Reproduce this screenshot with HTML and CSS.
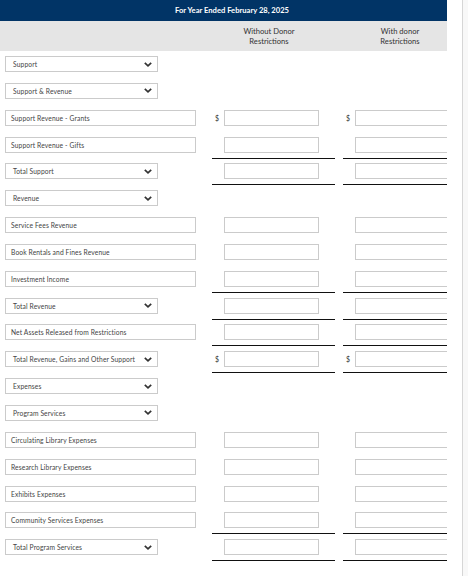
FILE: index.html
```html
<!DOCTYPE html>
<html>
<head>
<meta charset="utf-8">
<link rel="stylesheet" href="styles.css">
</head>
<body>
<div class="page">
  <div class="frame">
    <div class="sheet">
      <div class="title">For Year Ended February 28, 2025</div>
      <div class="colhead">
        <div></div>
        <div class="ch">Without Donor<br>Restrictions</div>
        <div></div>
        <div class="ch">With donor<br>Restrictions</div>
      </div>
      <div class="rows">
        <div class="row"><div class="lab"><div class="sel"><span>Support</span><svg class="chev" viewBox="0 0 10 6"><path d="M1 1 L5 4.6 L9 1"/></svg></div></div></div>
        <div class="row"><div class="lab"><div class="sel"><span>Support &amp; Revenue</span><svg class="chev" viewBox="0 0 10 6"><path d="M1 1 L5 4.6 L9 1"/></svg></div></div></div>
        <div class="row"><div class="lab"><div class="txt">Support Revenue - Grants</div></div>
          <div class="amt"><span class="cur">$</span><div class="box"></div></div><div></div>
          <div class="amt"><span class="cur">$</span><div class="box"></div></div></div>
        <div class="row"><div class="lab"><div class="txt">Support Revenue - Gifts</div></div>
          <div class="amt rule"><span class="cur"></span><div class="box"></div></div><div></div>
          <div class="amt rule"><span class="cur"></span><div class="box"></div></div></div>
        <div class="row"><div class="lab"><div class="sel"><span>Total Support</span><svg class="chev" viewBox="0 0 10 6"><path d="M1 1 L5 4.6 L9 1"/></svg></div></div>
          <div class="amt rule"><span class="cur"></span><div class="box"></div></div><div></div>
          <div class="amt rule"><span class="cur"></span><div class="box"></div></div></div>
        <div class="row"><div class="lab"><div class="sel"><span>Revenue</span><svg class="chev" viewBox="0 0 10 6"><path d="M1 1 L5 4.6 L9 1"/></svg></div></div></div>
        <div class="row"><div class="lab"><div class="txt">Service Fees Revenue</div></div>
          <div class="amt"><span class="cur"></span><div class="box"></div></div><div></div>
          <div class="amt"><span class="cur"></span><div class="box"></div></div></div>
        <div class="row"><div class="lab"><div class="txt">Book Rentals and Fines Revenue</div></div>
          <div class="amt"><span class="cur"></span><div class="box"></div></div><div></div>
          <div class="amt"><span class="cur"></span><div class="box"></div></div></div>
        <div class="row"><div class="lab"><div class="txt">Investment Income</div></div>
          <div class="amt rule"><span class="cur"></span><div class="box"></div></div><div></div>
          <div class="amt rule"><span class="cur"></span><div class="box"></div></div></div>
        <div class="row"><div class="lab"><div class="sel"><span>Total Revenue</span><svg class="chev" viewBox="0 0 10 6"><path d="M1 1 L5 4.6 L9 1"/></svg></div></div>
          <div class="amt rule"><span class="cur"></span><div class="box"></div></div><div></div>
          <div class="amt rule"><span class="cur"></span><div class="box"></div></div></div>
        <div class="row"><div class="lab"><div class="txt">Net Assets Released from Restrictions</div></div>
          <div class="amt rule"><span class="cur"></span><div class="box"></div></div><div></div>
          <div class="amt rule"><span class="cur"></span><div class="box"></div></div></div>
        <div class="row"><div class="lab"><div class="sel"><span>Total Revenue, Gains and Other Support</span><svg class="chev" viewBox="0 0 10 6"><path d="M1 1 L5 4.6 L9 1"/></svg></div></div>
          <div class="amt rule"><span class="cur">$</span><div class="box"></div></div><div></div>
          <div class="amt rule"><span class="cur">$</span><div class="box"></div></div></div>
        <div class="row"><div class="lab"><div class="sel"><span>Expenses</span><svg class="chev" viewBox="0 0 10 6"><path d="M1 1 L5 4.6 L9 1"/></svg></div></div></div>
        <div class="row"><div class="lab"><div class="sel"><span>Program Services</span><svg class="chev" viewBox="0 0 10 6"><path d="M1 1 L5 4.6 L9 1"/></svg></div></div></div>
        <div class="row"><div class="lab"><div class="txt">Circulating Library Expenses</div></div>
          <div class="amt"><span class="cur"></span><div class="box"></div></div><div></div>
          <div class="amt"><span class="cur"></span><div class="box"></div></div></div>
        <div class="row"><div class="lab"><div class="txt">Research Library Expenses</div></div>
          <div class="amt"><span class="cur"></span><div class="box"></div></div><div></div>
          <div class="amt"><span class="cur"></span><div class="box"></div></div></div>
        <div class="row"><div class="lab"><div class="txt">Exhibits Expenses</div></div>
          <div class="amt"><span class="cur"></span><div class="box"></div></div><div></div>
          <div class="amt"><span class="cur"></span><div class="box"></div></div></div>
        <div class="row"><div class="lab"><div class="txt">Community Services Expenses</div></div>
          <div class="amt rule"><span class="cur"></span><div class="box"></div></div><div></div>
          <div class="amt rule"><span class="cur"></span><div class="box"></div></div></div>
        <div class="row"><div class="lab"><div class="sel"><span>Total Program Services</span><svg class="chev" viewBox="0 0 10 6"><path d="M1 1 L5 4.6 L9 1"/></svg></div></div>
          <div class="amt rule"><span class="cur"></span><div class="box"></div></div><div></div>
          <div class="amt rule"><span class="cur"></span><div class="box"></div></div></div>
      </div>
    </div>
  </div>
  <div class="gap"></div>
  <div class="scroll"></div>
</div>
</body>
</html>
```

FILE: styles.css
```css
html, body {
  margin: 0;
  padding: 0;
  background: #fff;
}
body {
  font-family: Lato, "Open Sans", sans-serif;
  color: #333;
}
.page {
  display: flex;
  height: 576px;
  overflow: hidden;
}
.frame {
  width: 447px;
  flex: none;
  overflow: hidden;
}
.gap {
  width: 15px;
  flex: none;
}
.scroll {
  width: 5px;
  flex: none;
  border-left: 1px solid #d6d6d6;
  background: #f8f8f8;
}
.sheet {
  width: 466px;
}
.title {
  height: 21px;
  background: #013466;
  color: #fff;
  font-weight: bold;
  font-size: 7.6px;
  line-height: 21px;
  text-align: center;
  padding-right: 2px;
}
.colhead {
  height: 30px;
  background: #e5e5e5;
  display: grid;
  grid-template-columns: 212px 123px 8px 123px;
  align-items: center;
}
.ch {
  text-align: center;
  font-size: 7.6px;
  line-height: 10.5px;
  color: #333;
  padding-right: 9px;
}
.rows {
  padding-top: 5px;
}
.row {
  height: 26.85px;
  display: grid;
  grid-template-columns: 212px 123px 8px 123px;
  align-items: start;
}
.lab {
  padding-left: 5px;
}
.sel, .txt {
  box-sizing: border-box;
  height: 16px;
  border: 1px solid #cbcbcb;
  font-size: 6.7px;
  letter-spacing: 0.12px;
  color: #444;
  display: flex;
  align-items: center;
  white-space: nowrap;
}
.sel {
  width: 153px;
  padding: 0 5px 0 7px;
  justify-content: space-between;
}
.txt {
  width: 191px;
  padding-left: 5px;
}
.chev {
  width: 8px;
  height: 5px;
  flex: none;
  fill: none;
  stroke: #333;
  stroke-width: 2.2;
}
.amt {
  display: flex;
  align-items: flex-start;
  padding-left: 3px;
  height: 21px;
}
.amt.rule {
  border-bottom: 1px solid #111;
}
.cur {
  width: 9px;
  font-size: 7px;
  line-height: 16px;
  color: #333;
}
.box {
  box-sizing: border-box;
  width: 95px;
  height: 16px;
  border: 1px solid #cbcbcb;
}
```
